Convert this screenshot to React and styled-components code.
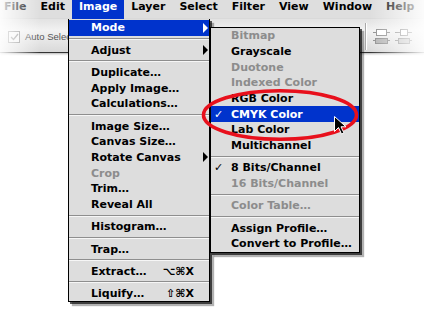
import styled, { createGlobalStyle } from 'styled-components';

const GlobalStyle = createGlobalStyle`
  html, body { margin: 0; padding: 0; background: #fff; }
  body { font-family: "DejaVu Sans", "Liberation Sans", sans-serif; }
`;

const Screen = styled.div`
  position: relative;
  width: 424px;
  height: 318px;
  overflow: hidden;
  background: #fff;
`;

// top area: menubar + options bar, faded at both edges like the cropped screenshot
const Header = styled.div`
  position: relative;
  z-index: 1;

  &::before,
  &::after {
    content: '';
    position: absolute;
    top: 0;
    bottom: -3px;
    pointer-events: none;
  }
  &::before {
    left: 0;
    width: 40px;
    background: linear-gradient(to right, rgba(255,255,255,0.9), rgba(255,255,255,0));
  }
  &::after {
    right: 0;
    width: 54px;
    background: linear-gradient(to left, rgba(255,255,255,0.9), rgba(255,255,255,0));
  }
`;

const MenuBar = styled.div`
  display: flex;
  height: 19px;
  background: #dedede;
`;

const MenuTitle = styled.div`
  padding: 0 7px;
  line-height: 19px;
  font: bold 11px "DejaVu Sans", sans-serif;
  color: ${p => (p.$active ? '#fff' : '#000')};
  background: ${p => (p.$active ? '#0033cc' : 'transparent')};
  white-space: nowrap;

  &:first-child {
    padding-left: 4px;
  }
`;

const OptionsBar = styled.div`
  display: flex;
  align-items: center;
  height: 31px;
  padding: 2px 0 0 8px;
  background: linear-gradient(#e2e2e2, #f2f2f2 35%, #d9d9d9);
  border-bottom: 1px solid #333;
  box-shadow: 0 1px 2px rgba(0, 0, 0, 0.3);
`;

const CheckBox = styled.div`
  width: 10px;
  height: 10px;
  border: 1px solid #8a8a8a;
  background: #f4f4f4;
  display: flex;
  align-items: center;
  justify-content: center;
`;

const OptionLabel = styled.span`
  margin-left: 5px;
  font: 9.5px "Liberation Sans", sans-serif;
  color: #555;
  white-space: nowrap;
`;

const AlignTools = styled.div`
  margin-left: auto;
  height: 100%;
  display: flex;
  align-items: center;
  padding-right: 11px;
`;

const Divider = styled.div`
  width: 1px;
  height: 27px;
  background: #a8a8a8;
  border-right: 1px solid #fff;
  margin-right: 6px;
`;

const Menu = styled.div`
  position: absolute;
  left: ${p => p.$left}px;
  top: ${p => p.$top}px;
  width: ${p => p.$width}px;
  z-index: ${p => p.$layer};
  box-sizing: border-box;
  background: #dddddd;
  border: 1px solid #000;
  border-top: ${p => (p.$attached ? 'none' : '1px solid #000')};
  padding-top: ${p => (p.$attached ? '1px' : '0')};
  box-shadow: 2px 2px 0 rgba(0, 0, 0, 0.65), 4px 4px 1px rgba(0, 0, 0, 0.3);
`;

const Item = styled.div`
  display: grid;
  grid-template-columns: ${p => p.$indent}px 1fr auto;
  align-items: center;
  height: 15.7px;
  padding-right: 1px;
  font: bold 11px "DejaVu Sans", sans-serif;
  white-space: nowrap;
  color: ${p => (p.$active ? '#fff' : p.$disabled ? '#8c8c8c' : '#000')};
  background: ${p => (p.$active ? '#0033cc' : 'transparent')};
`;

const Check = styled.span`
  padding-left: 3px;
  font-size: 11px;
`;

const Shortcut = styled.span`
  margin-right: 14px;
`;

const Arrow = styled.span`
  width: 0;
  height: 0;
  border-top: 5px solid transparent;
  border-bottom: 5px solid transparent;
  border-left: 5px solid ${p => (p.$light ? '#fff' : '#000')};
`;

const Separator = styled.div`
  height: 6.6px;
  display: flex;
  flex-direction: column;
  justify-content: center;

  &::before {
    content: '';
    height: 1px;
    background: #8e8e8e;
  }
  &::after {
    content: '';
    height: 1px;
    background: #f6f6f6;
  }
`;

const Overlay = styled.svg`
  position: absolute;
  left: 0;
  top: 0;
  z-index: 10;
  pointer-events: none;
`;

const titles = ['File', 'Edit', 'Image', 'Layer', 'Select', 'Filter', 'View', 'Window', 'Help'];

const imageMenu = [
  { label: 'Mode', sub: true, active: true },
  '-',
  { label: 'Adjust', sub: true },
  '-',
  { label: 'Duplicate…' },
  { label: 'Apply Image…' },
  { label: 'Calculations…' },
  '-',
  { label: 'Image Size…' },
  { label: 'Canvas Size…' },
  { label: 'Rotate Canvas', sub: true },
  { label: 'Crop', disabled: true },
  { label: 'Trim…' },
  { label: 'Reveal All' },
  '-',
  { label: 'Histogram…' },
  '-',
  { label: 'Trap…' },
  '-',
  { label: 'Extract…', keys: '⌥⌘X' },
  '-',
  { label: 'Liquify…', keys: '⇧⌘X' },
];

const modeMenu = [
  { label: 'Bitmap', disabled: true },
  { label: 'Grayscale' },
  { label: 'Duotone', disabled: true },
  { label: 'Indexed Color', disabled: true },
  { label: 'RGB Color' },
  { label: 'CMYK Color', checked: true, active: true },
  { label: 'Lab Color' },
  { label: 'Multichannel' },
  '-',
  { label: '8 Bits/Channel', checked: true },
  { label: '16 Bits/Channel', disabled: true },
  '-',
  { label: 'Color Table…', disabled: true },
  '-',
  { label: 'Assign Profile…' },
  { label: 'Convert to Profile…' },
];

const MenuItems = ({ items, indent }) =>
  items.map((it, i) =>
    it === '-' ? (
      <Separator key={i} />
    ) : (
      <Item key={i} $indent={indent} $active={it.active} $disabled={it.disabled}>
        <Check>{it.checked ? '✓' : ''}</Check>
        <span>{it.label}</span>
        {it.sub && <Arrow $light={it.active} />}
        {it.keys && <Shortcut>{it.keys}</Shortcut>}
      </Item>
    )
  );

const AlignIcons = () => (
  <svg width="40" height="18" viewBox="0 0 40 18">
    <g stroke="#8e8e8e" strokeWidth="1" shapeRendering="crispEdges">
      <line x1="0" y1="4.5" x2="17" y2="4.5" />
      <rect x="3.5" y="1.5" width="10" height="6" fill="#fff" />
      <line x1="0" y1="12.5" x2="17" y2="12.5" />
      <rect x="2.5" y="10.5" width="12" height="5" fill="#b4b4b4" />
      <line x1="22" y1="4.5" x2="39" y2="4.5" />
      <rect x="27.5" y="1.5" width="7" height="6" fill="#fff" />
      <line x1="22" y1="12.5" x2="39" y2="12.5" />
      <rect x="25.5" y="10.5" width="11" height="5" fill="#c4c4c4" />
    </g>
  </svg>
);

export default function App() {
  return (
    <Screen>
      <GlobalStyle />
      <Header>
        <MenuBar>
          {titles.map(t => (
            <MenuTitle key={t} $active={t === 'Image'}>{t}</MenuTitle>
          ))}
        </MenuBar>
        <OptionsBar>
          <CheckBox>
            <svg width="9" height="8" viewBox="0 0 9 8">
              <path d="M1 4 L3.5 6.5 L8 1" fill="none" stroke="#8a8a8a" strokeWidth="1.3" />
            </svg>
          </CheckBox>
          <OptionLabel>Auto Selec</OptionLabel>
          <AlignTools>
            <Divider />
            <AlignIcons />
          </AlignTools>
        </OptionsBar>
      </Header>

      <Menu $left={68} $top={19} $width={142} $layer={2} $attached>
        <MenuItems items={imageMenu} indent={22} />
      </Menu>

      <Menu $left={210} $top={27} $width={150} $layer={3}>
        <MenuItems items={modeMenu} indent={20} />
      </Menu>

      <Overlay width="424" height="318" viewBox="0 0 424 318">
        <ellipse cx="280" cy="115" rx="76.5" ry="24.3" fill="none" stroke="#e8101c" strokeWidth="3.6" />
        <path
          d="M334.5 116.5 L334.5 131.5 L338.5 127.5 L341.5 134 L344 133 L341 126.8 L346 126.8 Z"
          fill="#000"
          stroke="#fff"
          strokeWidth="1"
          strokeLinejoin="round"
        />
      </Overlay>
    </Screen>
  );
}
